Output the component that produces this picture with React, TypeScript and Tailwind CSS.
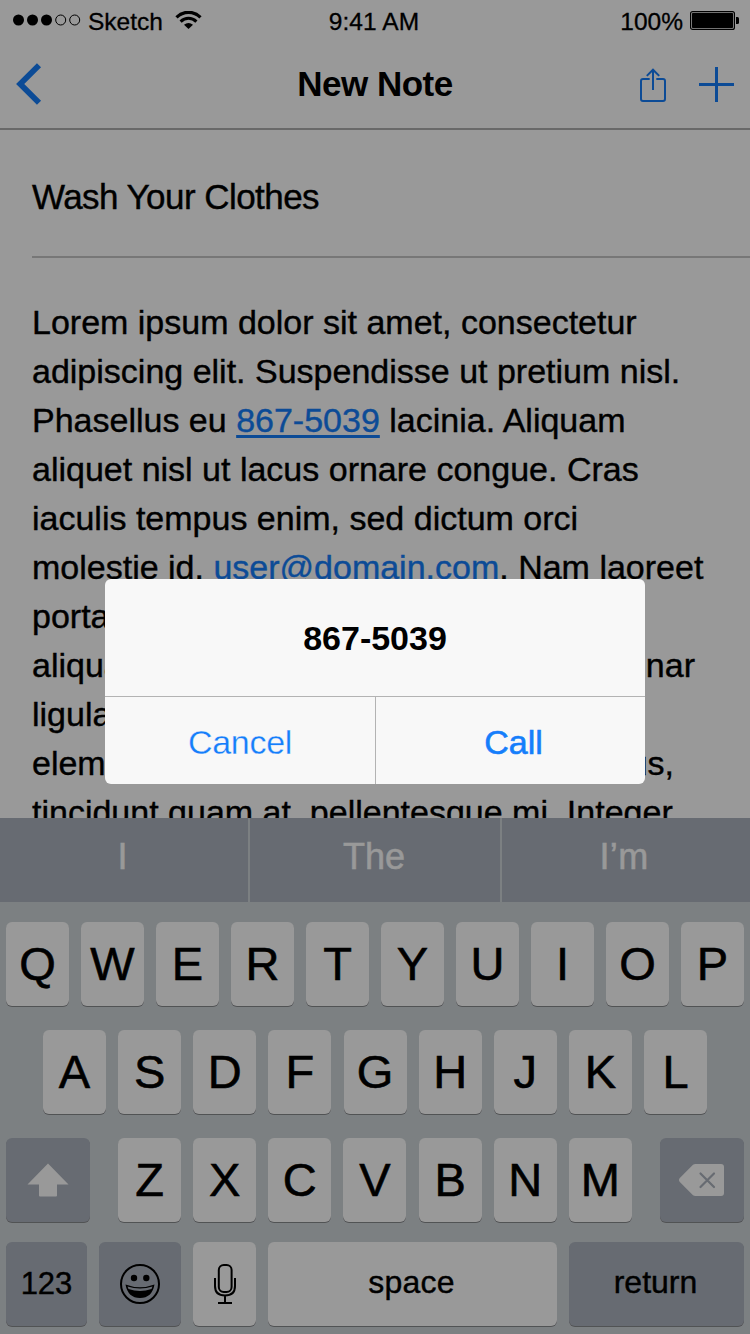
import type { ReactNode } from "react";

const LETTER =
  "flex h-[84px] w-[63px] shrink-0 justify-center rounded-md bg-white pt-[16px] text-[47px] leading-[52px] shadow-[0_1px_0_#888a8d] [-webkit-text-stroke:0.6px_#000]";
const DARK =
  "flex h-[84px] shrink-0 items-center justify-center rounded-md bg-[#acb3be] shadow-[0_1px_0_#888a8d]";

function Letters({ keys }: { keys: string }) {
  return (
    <>
      {keys.split("").map((k) => (
        <button key={k} className={LETTER}>
          {k}
        </button>
      ))}
    </>
  );
}

function Link({ children }: { children: ReactNode }) {
  return (
    <a className="text-[#157efb] underline decoration-[3px] underline-offset-[3px] [text-decoration-skip-ink:none] [-webkit-text-stroke:0.4px_#157efb]">
      {children}
    </a>
  );
}

function StatusBar() {
  return (
    <div className="grid h-10 grid-cols-3 items-center text-[24.5px] leading-[28px] [-webkit-text-stroke:0.3px_#000]">
      <div className="flex items-center pt-[3px]">
        <svg className="mt-[-4px] ml-3 h-3 w-[70px]" viewBox="0 0 70 12" stroke="#000">
          <circle cx="6.5" cy="6" r="5.5" stroke="none" />
          <circle cx="20.5" cy="6" r="5.5" stroke="none" />
          <circle cx="34.5" cy="6" r="5.5" stroke="none" />
          <circle cx="48.7" cy="6" r="5" fill="none" />
          <circle cx="62.7" cy="6" r="5" fill="none" />
        </svg>
        <span className="ml-[6px]">Sketch</span>
        <svg className="mt-[-4px] ml-[12px] h-[18px] w-[27px]" viewBox="0 0 27 18" fill="none" stroke="#000">
          <path d="M1.5 6.3C8.3 -.4 18.7 -.4 25.5 6.3" strokeWidth="3.2" />
          <path d="M5.6 10.6C10.2 6.2 16.8 6.2 21.4 10.6" strokeWidth="3.1" />
          <path d="M13.5 18L9 13.8Q13.5 10 18 13.8Z" fill="#000" stroke="none" />
        </svg>
      </div>
      <div className="pt-[3px] pr-[2px] text-center tracking-[0.1px]">9:41 AM</div>
      <div className="flex items-center justify-end pt-[3px]">
        <span>100%</span>
        <svg className="mt-[-3px] mr-[11px] ml-[7px] h-[19px] w-[49px]" viewBox="0 0 49 19" strokeWidth="0">
          <rect x=".6" y=".6" width="43.8" height="17.8" rx="2" fill="none" stroke="#000" strokeWidth="1.2" />
          <rect x="2" y="2" width="41" height="15" rx=".8" />
          <path d="M46 6h1.5q1.5 0 1.5 1.5v4q0 1.5-1.5 1.5H46z" />
        </svg>
      </div>
    </div>
  );
}

function NavBar() {
  return (
    <div className="grid h-[90px] grid-cols-3 border-b-2 border-[#b0b0b0] text-[#157efb]">
      <svg className="mt-[23px] ml-4 h-[42px] w-[26px]" viewBox="0 0 26 42" fill="none" stroke="currentColor" strokeWidth="5.8">
        <path d="M23 2.3L4.2 21L23 39.7" />
      </svg>
      <h1 className="mt-[24px] text-center text-[35px] leading-10 font-bold tracking-[-0.5px] text-black">New Note</h1>
      <div className="flex justify-end">
        <svg className="mt-[28px] h-[35px] w-[28px]" viewBox="0 0 28 35" fill="none" stroke="currentColor" strokeWidth="2">
          <path d="M10.7 11H4Q2 11 2 13V31Q2 33 4 33H24Q26 33 26 31V13Q26 11 24 11H17.3" />
          <path d="M14 22V1.5M7.8 7.9L14 1.7L20.2 7.9" />
        </svg>
        <svg className="mt-[27px] mr-4 ml-8 h-[35px] w-[35px]" viewBox="0 0 35 35" stroke="currentColor" strokeWidth="3">
          <path d="M0 17.5H35M17.5 0V35" />
        </svg>
      </div>
    </div>
  );
}

function Note() {
  return (
    <main className="h-[688px] overflow-hidden pl-8 text-[34px] [-webkit-text-stroke:0.4px_#000]">
      <h2 className="h-[128px] border-b-2 border-[#c6c6c6] pt-[47px] text-[35px] leading-10 tracking-[-0.55px]">
        Wash Your Clothes
      </h2>
      <p className="pt-10 leading-[49px] whitespace-nowrap">
        Lorem ipsum dolor sit amet, consectetur
        <br />
        adipiscing elit. Suspendisse ut pretium nisl.
        <br />
        Phasellus eu <Link>867-5039</Link> lacinia. Aliquam
        <br />
        aliquet nisl ut lacus ornare congue. Cras
        <br />
        iaculis tempus enim, sed dictum orci
        <br />
        molestie id. <Link>user@domain.com</Link>. Nam laoreet
        <br />
        porta
        <br />
        <span className="flex justify-between pr-[55px]">
          <span>aliqua</span>
          <span>nar</span>
        </span>
        ligula a
        <br />
        <span className="flex justify-between pr-[76px]">
          <span>elem</span>
          <span>us,</span>
        </span>
        tincidunt quam at, pellentesque mi. Integer
      </p>
    </main>
  );
}

function Keyboard() {
  return (
    <section className="h-[516px] bg-[#cfd5d9]">
      <div className="flex h-[84px] gap-[2px] text-center text-[36px] leading-[77px] text-white [-webkit-text-stroke:0.5px_#fff]">
        <div className="w-[248px] bg-[#acb3be] pr-[3px]">I</div>
        <div className="w-[250px] bg-[#acb3be] pr-[2px]">The</div>
        <div className="w-[248px] bg-[#acb3be] pr-[4px] tracking-[0.4px]">I’m</div>
      </div>
      <div className="flex justify-between px-[6px] pt-5">
        <Letters keys="QWERTYUIOP" />
      </div>
      <div className="flex justify-between px-[43px] pt-6">
        <Letters keys="ASDFGHJKL" />
      </div>
      <div className="flex justify-between px-[6px] pt-6">
        <button className={DARK + " w-[84px]"}>
          <svg className="h-[34px] w-[42px]" viewBox="0 0 42 34" fill="#fff">
            <path d="M21 .5L41.5 21.5H30V32.5Q30 33.5 29 33.5H13Q12 33.5 12 32.5V21.5H.5Z" />
          </svg>
        </button>
        <div className="flex w-[514px] justify-between">
          <Letters keys="ZXCVBNM" />
        </div>
        <button className={DARK + " w-[84px]"}>
          <svg className="h-[32px] w-[46px]" viewBox="0 0 46 32">
            <path d="M14 .8Q15 0 16.5 0H42Q45 0 45 3V29Q45 32 42 32H16.5Q15 32 14 31.2L.8 18Q-.8 16 .8 14Z" fill="#fff" />
            <path d="M21.5 9.5L35 23M35 9.5L21.5 23" stroke="#acb3be" strokeWidth="2.2" strokeLinecap="round" />
          </svg>
        </button>
      </div>
      <div className="flex gap-3 px-[6px] pt-5 text-[32px]">
        <button className={DARK + " w-[81px] text-[31px] [-webkit-text-stroke:0.4px_#000]"}>123</button>
        <button className={DARK + " w-[82px]"}>
          <svg className="h-10 w-10" viewBox="0 0 40 40">
            <circle cx="20" cy="20" r="19" fill="none" stroke="#000" strokeWidth="2" />
            <circle cx="14" cy="14" r="3.2" />
            <circle cx="26.3" cy="14" r="3.2" />
            <path d="M5.5 20.5Q20 26 34.5 20.5Q32 34 20 34T5.5 20.5ZM7.5 22.5Q20 26.5 32.5 22.5L31.5 25Q20 29 8.5 25Z" fillRule="evenodd" />
          </svg>
        </button>
        <button className="flex h-[84px] w-[63px] items-center justify-center rounded-md bg-white shadow-[0_1px_0_#888a8d]">
          <svg className="h-10 w-[22px]" viewBox="0 0 22 40" fill="none" stroke="#000" strokeWidth="2">
            <rect x="4.8" y="1" width="12.8" height="27" rx="5" />
            <path d="M1 14V22Q1 31.5 11 31.5T21 22V14M11 31.5V39M4 39H18" />
          </svg>
        </button>
        <button className="h-[84px] w-[289px] rounded-md bg-white pr-[2px] pb-[5px] tracking-[0.2px] shadow-[0_1px_0_#888a8d] [-webkit-text-stroke:0.4px_#000]">
          space
        </button>
        <button className={DARK + " w-[175px] pr-[2px] pb-[5px] [-webkit-text-stroke:0.4px_#000]"}>return</button>
      </div>
    </section>
  );
}

function Alert() {
  return (
    <div className="absolute inset-0 bg-black/40">
      <div className="mx-auto mt-[579px] h-[205px] w-[540px] rounded-md bg-[#f8f8f8] text-center text-[34px] leading-10">
        <div className="h-[118px] border-b border-[#b3b3b3] pt-[39px] font-bold">867-5039</div>
        <div className="grid h-[87px] grid-cols-2 text-[#157efb]">
          <button className="pt-[3px] tracking-[-0.3px] [-webkit-text-stroke:0.3px_#f8f8f8]">Cancel</button>
          <button className="border-l border-[#b3b3b3] pt-[2px] pl-[6px] [-webkit-text-stroke:0.6px_#157efb]">Call</button>
        </div>
      </div>
    </div>
  );
}

export default function App() {
  return (
    <div className="relative h-[1334px] w-[750px] overflow-hidden bg-white font-['Liberation_Sans',Arial,sans-serif] text-black">
      <StatusBar />
      <NavBar />
      <Note />
      <Keyboard />
      <Alert />
    </div>
  );
}
